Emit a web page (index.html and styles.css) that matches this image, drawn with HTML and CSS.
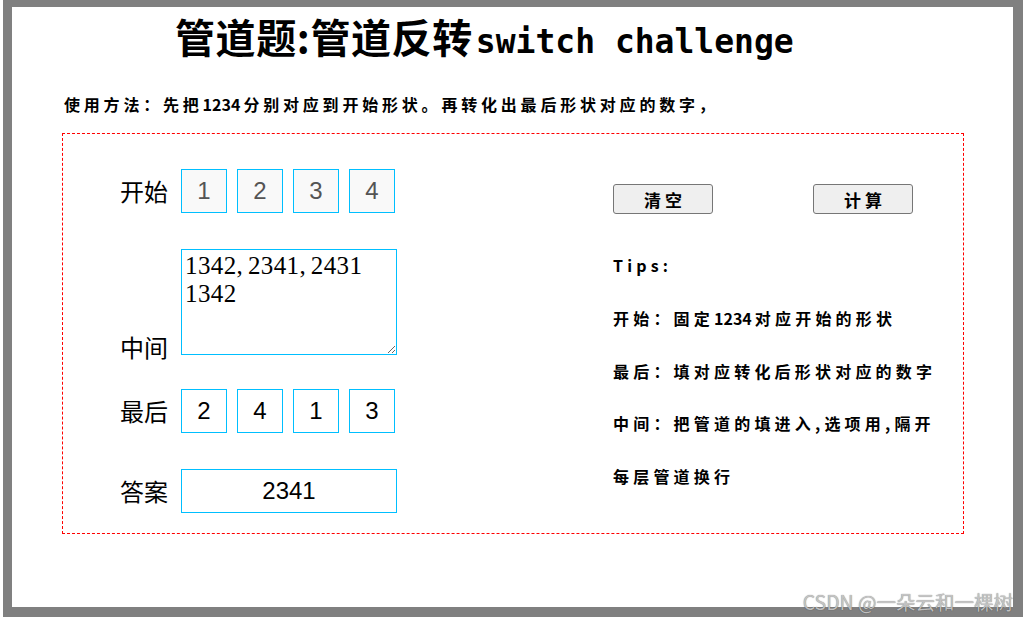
FILE: index.html
```html
<!DOCTYPE html>
<html lang="zh-CN">
<head>
  <meta charset="UTF-8" />
  <meta name="viewport" content="width=device-width, initial-scale=1.0"/>
  <title>管道题:管道反转switch challenge</title>
  <link rel="stylesheet" href="styles.css">
</head>
<body>
  <div class="frame">
    <h1 class="title">管道题:管道反转<span class="latin">switch challenge</span></h1>
    <p class="usage">使用方法：先把<span class="num">1234</span>分别对应到开始形状。再转化出最后形状对应的数字，</p>

    <div class="board">
      <div class="left">
        <div class="row row-start">
          <label class="label">开始</label>
          <input class="cell fixed" type="text" value="1" readonly />
          <input class="cell fixed" type="text" value="2" readonly />
          <input class="cell fixed" type="text" value="3" readonly />
          <input class="cell fixed" type="text" value="4" readonly />
        </div>
        <div class="row row-middle">
          <label class="label label-bottom" for="middle">中间</label>
          <textarea id="middle" class="middle">1342, 2341, 2431
1342</textarea>
        </div>
        <div class="row row-end">
          <label class="label">最后</label>
          <input class="cell" type="text" value="2" />
          <input class="cell" type="text" value="4" />
          <input class="cell" type="text" value="1" />
          <input class="cell" type="text" value="3" />
        </div>
        <div class="row">
          <label class="label">答案</label>
          <input class="answer" type="text" value="2341" />
        </div>
      </div>

      <div class="right">
        <div class="actions">
          <button class="btn">清空</button>
          <button class="btn">计算</button>
        </div>
        <div class="tips">
          <p>Tips:</p>
          <p>开始：固定<span class="num">1234</span>对应开始的形状</p>
          <p>最后：填对应转化后形状对应的数字</p>
          <p>中间：把管道的填进入,选项用,隔开</p>
          <p>每层管道换行</p>
        </div>
      </div>
    </div>
  </div>

  <div class="mark">CSDN @一朵云和一棵树</div>
</body>
</html>
```

FILE: styles.css
```css
body {
  margin: 0;
  background: #fff;
  color: #000;
  font-family: "Noto Sans CJK SC", sans-serif;
  overflow: hidden;
}

.frame {
  margin-left: 3px;
  width: 1020px;
  height: 617px;
  box-sizing: border-box;
  border-style: solid;
  border-color: #808080;
  border-width: 7px 10px 10px 9px;
}

.title {
  margin: 9px 0 0;
  padding-left: 163px;
  font-size: 40px;
  line-height: 40px;
  font-weight: bold;
  letter-spacing: 0.6px;
  white-space: nowrap;
}

.title .latin {
  font-family: "DejaVu Sans Mono", monospace;
  font-size: 33px;
  letter-spacing: 0;
  margin-left: 3px;
}

.usage {
  margin: 30px 0 0 52px;
  font-size: 16px;
  line-height: 24px;
  font-weight: bold;
  letter-spacing: 3.8px;
  white-space: nowrap;
}

.num {
  letter-spacing: 0;
  margin-right: 3px;
}

.board {
  margin: 17px 0 0 50px;
  width: 902px;
  box-sizing: border-box;
  border: 1px dashed #f00;
  padding: 35px 0 20px 57px;
  display: flex;
}

.left {
  width: 277px;
  display: flex;
  flex-direction: column;
}

.row {
  display: flex;
  align-items: center;
  gap: 10px;
}

.row-start { margin-bottom: 36px; }
.row-middle { margin-bottom: 34px; align-items: flex-end; }
.row-end { margin-bottom: 36px; }

.label {
  width: 51px;
  font-size: 24px;
  line-height: 44px;
  white-space: nowrap;
}

.label-bottom {
  line-height: 24px;
  margin-bottom: -4px;
}

.cell,
.answer {
  height: 44px;
  box-sizing: border-box;
  border: 1px solid #00bfff;
  background: #fff;
  font-family: "Liberation Sans", Arial, sans-serif;
  font-size: 24px;
  color: #000;
  text-align: center;
  padding: 0;
  outline: none;
}

.cell {
  width: 46px;
}

.cell.fixed {
  background: #f9f9f9;
  color: #545454;
}

.answer {
  width: 216px;
}

.middle {
  width: 216px;
  height: 106px;
  box-sizing: border-box;
  border: 1px solid #00bfff;
  padding: 2px 3px;
  font-family: "Liberation Serif", serif;
  font-size: 25px;
  line-height: 28px;
  letter-spacing: 0.4px;
  word-spacing: -2px;
  outline: none;
}

.right {
  margin: 15px 0 0 216px;
}

.actions {
  display: flex;
  gap: 100px;
}

.btn {
  width: 100px;
  height: 30px;
  background: #efefef;
  border: 1px solid #767676;
  border-radius: 3px;
  font-family: "Noto Sans CJK SC", sans-serif;
  font-size: 17px;
  font-weight: bold;
  letter-spacing: 4px;
  text-indent: 4px;
  padding: 0;
  color: #000;
}

.tips {
  margin-top: 25px;
  font-size: 16px;
  font-weight: bold;
  letter-spacing: 4.2px;
  line-height: 52.8px;
  white-space: nowrap;
}

.tips p {
  margin: 0;
}

.mark {
  position: absolute;
  right: 16px;
  top: 589px;
  font-size: 19.5px;
  line-height: 26px;
  color: rgba(200, 200, 200, 0.95);
  text-shadow: 0 0 1px rgba(0, 0, 0, 0.55);
}
```
